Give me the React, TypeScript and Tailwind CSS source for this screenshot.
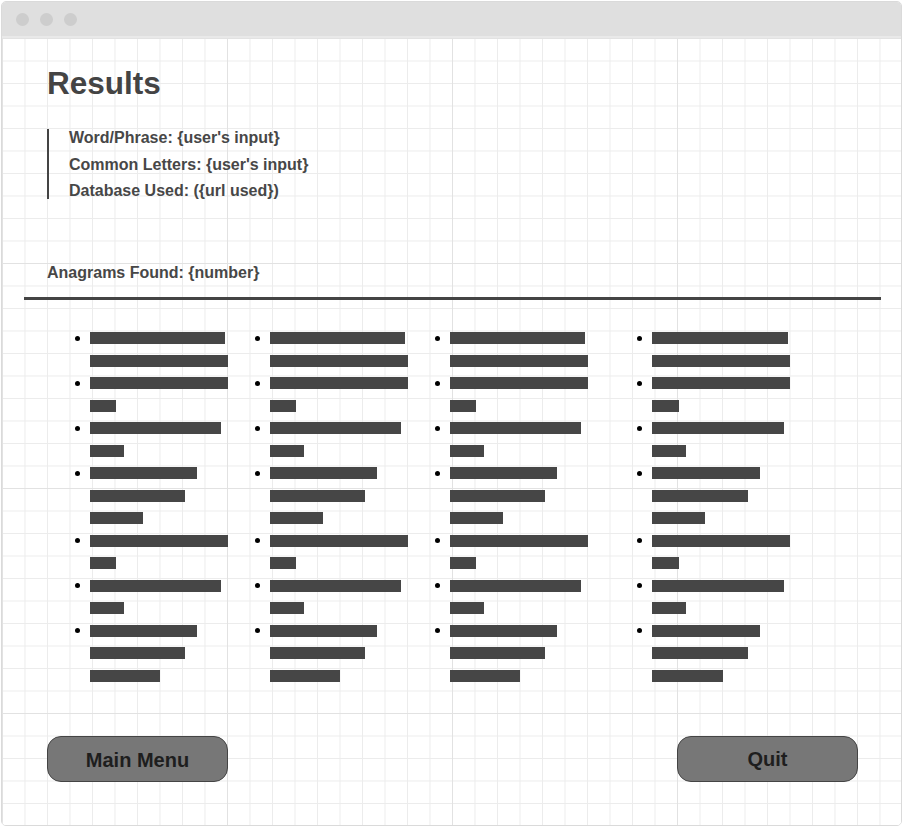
const BARS: number[][][] = [
  [[135, 138], [138, 26], [131, 34], [107, 95, 53], [138, 26], [131, 34], [107, 95, 70]],
  [[135, 138], [138, 26], [131, 34], [107, 95, 53], [138, 26], [131, 34], [107, 95, 70]],
  [[135, 138], [138, 26], [131, 34], [107, 95, 53], [138, 26], [131, 34], [107, 95, 70]],
  [[136, 138], [138, 27], [132, 34], [108, 96, 53], [138, 27], [132, 34], [108, 96, 71]],
];

const COL_WIDTHS = ["w-[180px]", "w-[180px]", "w-[202px]", "w-[180px]"];

function AnagramColumn({ items, width }: { items: number[][]; width: string }) {
  return (
    <ul className={`${width} flex flex-col`}>
      {items.map((lines, i) => (
        <li key={i} className="flex">
          <div className="h-[22.5px] w-[15px] flex items-center">
            <span className="block w-[5px] h-[5px] rounded-full bg-black" />
          </div>
          <div className="flex flex-col">
            {lines.map((w, j) => (
              <div key={j} className="h-[22.5px] flex items-center">
                <div className="h-[12px] bg-[#464646]" style={{ width: w }} />
              </div>
            ))}
          </div>
        </li>
      ))}
    </ul>
  );
}

export default function App() {
  return (
    <div className="w-[903px] h-[828px] bg-white pl-[1px] pt-[1px] font-['Liberation_Sans',Arial,sans-serif]">
      <div className="w-[901px] h-[825px] border border-[#dadada] rounded-[5px] overflow-hidden flex flex-col">
        {/* title bar */}
        <div className="h-[36px] shrink-0 bg-[#dfdfdf] flex items-center gap-[11px] pl-[14px] border-b-2 border-[#e9e9e9]">
          <span className="w-[13px] h-[13px] rounded-full bg-[#cdcdcd]" />
          <span className="w-[13px] h-[13px] rounded-full bg-[#cdcdcd]" />
          <span className="w-[13px] h-[13px] rounded-full bg-[#cdcdcd]" />
        </div>

        <div className="flex-1 flex flex-col bg-white bg-[linear-gradient(to_right,#e2e2e2_1px,transparent_1px),linear-gradient(to_bottom,#e2e2e2_1px,transparent_1px),linear-gradient(to_right,#ececec_1px,transparent_1px),linear-gradient(to_bottom,#ececec_1px,transparent_1px)] [background-size:225px_225px,225px_225px,22.5px_22.5px,22.5px_22.5px]">
          <h1 className="mt-[30px] ml-[45px] text-[31.5px] leading-[31px] font-bold text-[#444]">
            Results
          </h1>

          <div className="mt-[30px] ml-[45px] border-l-2 border-[#444] pl-[20px] pt-[1px] flex flex-col gap-[10.5px] text-[16px] leading-[16px] font-bold text-[#474747]">
            <p>Word/Phrase: {"{user's input}"}</p>
            <p>Common Letters: {"{user's input}"}</p>
            <p>Database Used: ({"{url used}"})</p>
          </div>

          <p className="mt-[66px] ml-[45px] text-[16px] leading-[16px] font-bold text-[#474747]">
            Anagrams Found: {"{number}"}
          </p>

          <div className="mt-[16px] ml-[22px] mr-[20px] h-[3px] bg-[#444]" />

          <div className="mt-[26.75px] ml-[73px] flex">
            {BARS.map((items, i) => (
              <AnagramColumn key={i} items={items} width={COL_WIDTHS[i]} />
            ))}
          </div>

          <div className="mt-[49px] ml-[45px] mr-[43px] flex justify-between">
            <button className="w-[181px] h-[46px] pt-[2px] rounded-[14px] border border-[#444] bg-[#777] text-[20px] font-bold text-[#1e1e1e]">
              Main Menu
            </button>
            <button className="w-[181px] h-[46px] pt-[1px] rounded-[14px] border border-[#444] bg-[#777] text-[20px] font-bold text-[#1e1e1e]">
              Quit
            </button>
          </div>
        </div>
      </div>
    </div>
  );
}
